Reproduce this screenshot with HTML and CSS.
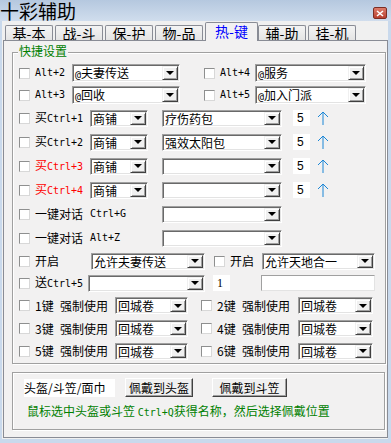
FILE: index.html
```html
<!DOCTYPE html>
<html lang="zh">
  <head>
    <meta charset="UTF-8"/>
    <title>十彩辅助</title>
    <link rel="stylesheet" href="styles.css">
  </head>
  <body>
    <div class="titlebar">
      <span class="title">十彩辅助</span>
      <span class="close">
        <svg width="8" height="7" viewBox="0 0 8 7"><path d="M1 1L7 6M7 1L1 6" stroke="#fff" stroke-width="1.6"/></svg>
      </span>
    </div>
    <div class="client">
      <div class="tabs">
        <div class="tab">基-本</div>
        <div class="tab">战-斗</div>
        <div class="tab">保-护</div>
        <div class="tab">物-品</div>
        <div class="tab on">热-键</div>
        <div class="tab">辅-助</div>
        <div class="tab">挂-机</div>
      </div>
      <div class="panel">
        <div class="group">
          <span class="legend">快捷设置</span>

          <div class="row r22">
            <span class="cb"></span><span class="lab l-alt en">Alt+2</span>
            <div class="combo c-alt tall"><span class="val"><span class="en">@</span>夫妻传送</span><span class="drop"></span></div>
            <span class="cb ml24"></span><span class="lab l-alt2 en">Alt+4</span>
            <div class="combo c-alt2 tall"><span class="val"><span class="en">@</span>服务</span><span class="drop"></span></div>
          </div>
          <div class="row r22">
            <span class="cb"></span><span class="lab l-alt en">Alt+3</span>
            <div class="combo c-alt tall"><span class="val"><span class="en">@</span>回收</span><span class="drop"></span></div>
            <span class="cb ml24"></span><span class="lab l-alt2 en">Alt+5</span>
            <div class="combo c-alt2 tall"><span class="val"><span class="en">@</span>加入门派</span><span class="drop"></span></div>
          </div>

          <div class="row">
            <span class="cb"></span><span class="lab l-buy">买<span class="en">Ctrl+1</span></span>
            <div class="combo c-shop"><span class="val">商铺</span><span class="drop"></span></div>
            <div class="combo c-item ml14"><span class="val">疗伤药包</span><span class="drop"></span></div>
            <span class="num ml11">5</span>
            <svg class="up" width="12" height="14" viewBox="0 0 12 14"><path d="M6 1V14M1 6L6 1L11 6" fill="none" stroke="#1b86d6"/></svg>
          </div>
          <div class="row">
            <span class="cb"></span><span class="lab l-buy">买<span class="en">Ctrl+2</span></span>
            <div class="combo c-shop"><span class="val">商铺</span><span class="drop"></span></div>
            <div class="combo c-item ml14"><span class="val">强效太阳包</span><span class="drop"></span></div>
            <span class="num ml11">5</span>
            <svg class="up" width="12" height="14" viewBox="0 0 12 14"><path d="M6 1V14M1 6L6 1L11 6" fill="none" stroke="#1b86d6"/></svg>
          </div>
          <div class="row">
            <span class="cb"></span><span class="lab l-buy red">买<span class="en">Ctrl+3</span></span>
            <div class="combo c-shop"><span class="val">商铺</span><span class="drop"></span></div>
            <div class="combo c-item ml14"><span class="val"></span><span class="drop"></span></div>
            <span class="num ml11">5</span>
            <svg class="up" width="12" height="14" viewBox="0 0 12 14"><path d="M6 1V14M1 6L6 1L11 6" fill="none" stroke="#1b86d6"/></svg>
          </div>
          <div class="row">
            <span class="cb"></span><span class="lab l-buy red">买<span class="en">Ctrl+4</span></span>
            <div class="combo c-shop"><span class="val">商铺</span><span class="drop"></span></div>
            <div class="combo c-item ml14"><span class="val"></span><span class="drop"></span></div>
            <span class="num ml11">5</span>
            <svg class="up" width="12" height="14" viewBox="0 0 12 14"><path d="M6 1V14M1 6L6 1L11 6" fill="none" stroke="#1b86d6"/></svg>
          </div>

          <div class="row">
            <span class="cb"></span><span class="lab l-buy">一键对话</span><span class="lab l-key en">Ctrl+G</span>
            <div class="combo c-item"><span class="val"></span><span class="drop"></span></div>
          </div>
          <div class="row">
            <span class="cb"></span><span class="lab l-buy">一键对话</span><span class="lab l-key en">Alt+Z</span>
            <div class="combo c-item"><span class="val"></span><span class="drop"></span></div>
          </div>

          <div class="row r22">
            <span class="cb"></span><span class="lab l-open">开启</span>
            <div class="combo c-allow"><span class="val">允许夫妻传送</span><span class="drop"></span></div>
            <span class="cb ml9"></span><span class="lab l-open2">开启</span>
            <div class="combo c-allow2"><span class="val">允许天地合一</span><span class="drop"></span></div>
          </div>
          <div class="row r22">
            <span class="cb"></span><span class="lab l-send">送<span class="en">Ctrl+5</span></span>
            <div class="combo c-send"><span class="val"></span><span class="drop"></span></div>
            <span class="num one ml8">1</span>
            <span class="field ml31"></span>
          </div>

          <div class="row r23">
            <span class="cb"></span><span class="lab l-n">1键</span><span class="lab l-force">强制使用</span>
            <div class="combo c-scroll"><span class="val">回城卷</span><span class="drop"></span></div>
            <span class="cb ml13"></span><span class="lab l-n">2键</span><span class="lab l-force2">强制使用</span>
            <div class="combo c-scroll2"><span class="val">回城卷</span><span class="drop"></span></div>
          </div>
          <div class="row r23">
            <span class="cb"></span><span class="lab l-n">3键</span><span class="lab l-force">强制使用</span>
            <div class="combo c-scroll"><span class="val">回城卷</span><span class="drop"></span></div>
            <span class="cb ml13"></span><span class="lab l-n">4键</span><span class="lab l-force2">强制使用</span>
            <div class="combo c-scroll2"><span class="val">回城卷</span><span class="drop"></span></div>
          </div>
          <div class="row r22">
            <span class="cb"></span><span class="lab l-n">5键</span><span class="lab l-force">强制使用</span>
            <div class="combo c-scroll"><span class="val">回城卷</span><span class="drop"></span></div>
            <span class="cb ml13"></span><span class="lab l-n">6键</span><span class="lab l-force2">强制使用</span>
            <div class="combo c-scroll2"><span class="val">回城卷</span><span class="drop"></span></div>
          </div>
        </div>

        <div class="group box2">
          <div class="brow">
            <span class="namefield">头盔/斗笠/面巾</span>
            <span class="btn btn-head">佩戴到头盔</span>
            <span class="btn btn-hat">佩戴到斗笠</span>
          </div>
          <p class="hint">鼠标选中头盔或斗笠 <span class="en">Ctrl+Q</span>获得名称，然后选择佩戴位置</p>
        </div>
      </div>
    </div>
  </body>
</html>
```

FILE: styles.css
```css
* {
  box-sizing: border-box;
}
body {
  margin: 0;
  width: 391px;
  height: 443px;
  overflow: hidden;
  background-color: #c9d9ec;
  font: 12px/14px "Noto Sans CJK SC", sans-serif;
  color: #000;
}

/* title bar */
.titlebar {
  height: 21px;
  display: flex;
  justify-content: space-between;
  background: linear-gradient(#b5c8df, #d0dded);
}
.title {
  font-size: 19px;
  line-height: 21px;
  height: 21px;
  white-space: nowrap;
}
.close {
  width: 14px;
  height: 12px;
  margin: 7px 4px 0 0;
  display: flex;
  align-items: center;
  justify-content: center;
  background: linear-gradient(#dd7d6c, #b9402f);
  border: 1px solid #7d2e24;
  border-radius: 2px;
}

/* window body */
.client {
  height: 418px;
  margin: 0 3px 0 2px;
  background-color: #f0f0f0;
  display: flex;
  flex-direction: column;
}
.tabs {
  height: 19px;
  display: flex;
  align-items: flex-end;
  padding-left: 3px;
}
  .tab {
    width: 48px;
    height: 15px;
    margin-right: 2px;
    border: 1px solid #898c95;
    border-bottom: none;
    border-radius: 2px 2px 0 0;
    background: linear-gradient(#f4f4f4, #e4e4e4);
    text-align: center;
    font-size: 14px;
    line-height: 14px;
  }
  .tab.on {
    width: 53px;
    height: 19px;
    margin: 0 0 -1px 0;
    background: #f2f1f1;
    color: #0000ff;
    line-height: 17px;
    position: relative;
    z-index: 1;
  }
.panel {
  flex: 1;
  margin: 0 0 1px 1px;
  border: 1px solid #898c95;
  background-color: #f2f1f1;
  padding: 11px 1px 0 8px;
}

/* group boxes */
.group {
  position: relative;
  border: 1px solid #a0a0a0;
  box-shadow: 1px 1px 0 #fff, inset 1px 1px 0 #fff;
  padding: 9px 0 1px 6px;
}
  .legend {
    position: absolute;
    top: -9px;
    left: 5px;
    padding: 0 1px;
    background-color: #f2f1f1;
    color: #008000;
  }

.row {
  display: flex;
  align-items: center;
  height: 24px;
  white-space: nowrap;
}
.r22 { height: 22px; }
.r23 { height: 23px; }

.cb {
  flex: none;
  width: 11px;
  height: 11px;
  margin-right: 5px;
  background-color: #fff;
  border: 1px solid;
  border-color: #8e8f8f #d8d8d8 #d8d8d8 #8e8f8f;
}
.lab {
  flex: none;
}
.en {
  font-family: "DejaVu Sans Mono", monospace;
  font-size: 10px;
}
.red { color: #ff0000; }

/* label columns */
.l-alt { width: 37px; }
.l-alt2 { width: 35px; }
.l-buy { width: 55px; }
.l-key { width: 72px; }
.l-open { width: 56px; }
.l-open2 { width: 32px; }
.l-send { width: 53px; }
.l-n { width: 25px; }
.l-force { width: 55px; }
.l-force2 { width: 56px; }

/* combo boxes */
.combo {
  flex: none;
  display: flex;
  height: 17px;
  padding: 1px;
  background-color: #fff;
  border: 1px solid;
  border-color: #a0a0a0 #fff #fff #a0a0a0;
  box-shadow: inset 1px 1px 0 #696969, inset -1px -1px 0 #e3e3e3;
}
.combo.tall { height: 18px; }
  .val {
    flex: 1;
    padding-left: 1px;
    line-height: 13px;
  }
  .tall .val { line-height: 14px; }
  .drop {
    flex: none;
    width: 16px;
    display: flex;
    align-items: center;
    justify-content: center;
    background-color: #f0f0f0;
    border: 1px solid;
    border-color: #f0f0f0 #404040 #404040 #f0f0f0;
    box-shadow: inset 1px 1px 0 #fff, inset -1px -1px 0 #a0a0a0;
  }
  .drop::after {
    content: "";
    border-left: 4px solid transparent;
    border-right: 4px solid transparent;
    border-top: 4px solid #000;
  }
.c-alt { width: 108px; }
.c-alt2 { width: 111px; }
.c-shop { width: 58px; }
.c-item { width: 120px; }
.c-allow { width: 114px; }
.c-allow2 { width: 113px; }
.c-send { width: 117px; }
.c-scroll { width: 73px; }
.c-scroll2 { width: 75px; }

.num {
  flex: none;
  width: 17px;
  height: 16px;
  padding-left: 4px;
  background-color: #fff;
  font-family: "Liberation Sans", sans-serif;
  line-height: 16px;
}
.num.one {
  font-family: "Liberation Serif", serif;
}
.field {
  flex: none;
  width: 114px;
  height: 16px;
  background-color: #fff;
  border: 1px solid;
  border-color: #a0a0a0 #e3e3e3 #e3e3e3 #a0a0a0;
}
.up {
  flex: none;
  margin-left: 7px;
}

.ml8 { margin-left: 8px; }
.ml9 { margin-left: 9px; }
.ml11 { margin-left: 11px; }
.ml13 { margin-left: 13px; }
.ml14 { margin-left: 14px; }
.ml24 { margin-left: 24px; }
.ml31 { margin-left: 31px; }

/* helmet box */
.box2 {
  margin: 8px 1px 0 0;
  padding: 5px 0 9px 11px;
}
.brow {
  display: flex;
  align-items: center;
  height: 19px;
}
  .namefield {
    width: 91px;
    height: 18px;
    background-color: #fff;
    line-height: 18px;
    white-space: nowrap;
  }
  .btn {
    height: 19px;
    display: flex;
    align-items: center;
    justify-content: center;
    background-color: #f0f0f0;
    border: 1px solid;
    border-color: #fff #404040 #404040 #fff;
    box-shadow: inset -1px -1px 0 #a0a0a0;
  }
  .btn-head {
    width: 68px;
    margin-left: 10px;
  }
  .btn-hat {
    width: 75px;
    margin-left: 19px;
  }
.hint {
  margin: 7px 0 0 3px;
  color: #008000;
  line-height: 14px;
  white-space: nowrap;
}
```
